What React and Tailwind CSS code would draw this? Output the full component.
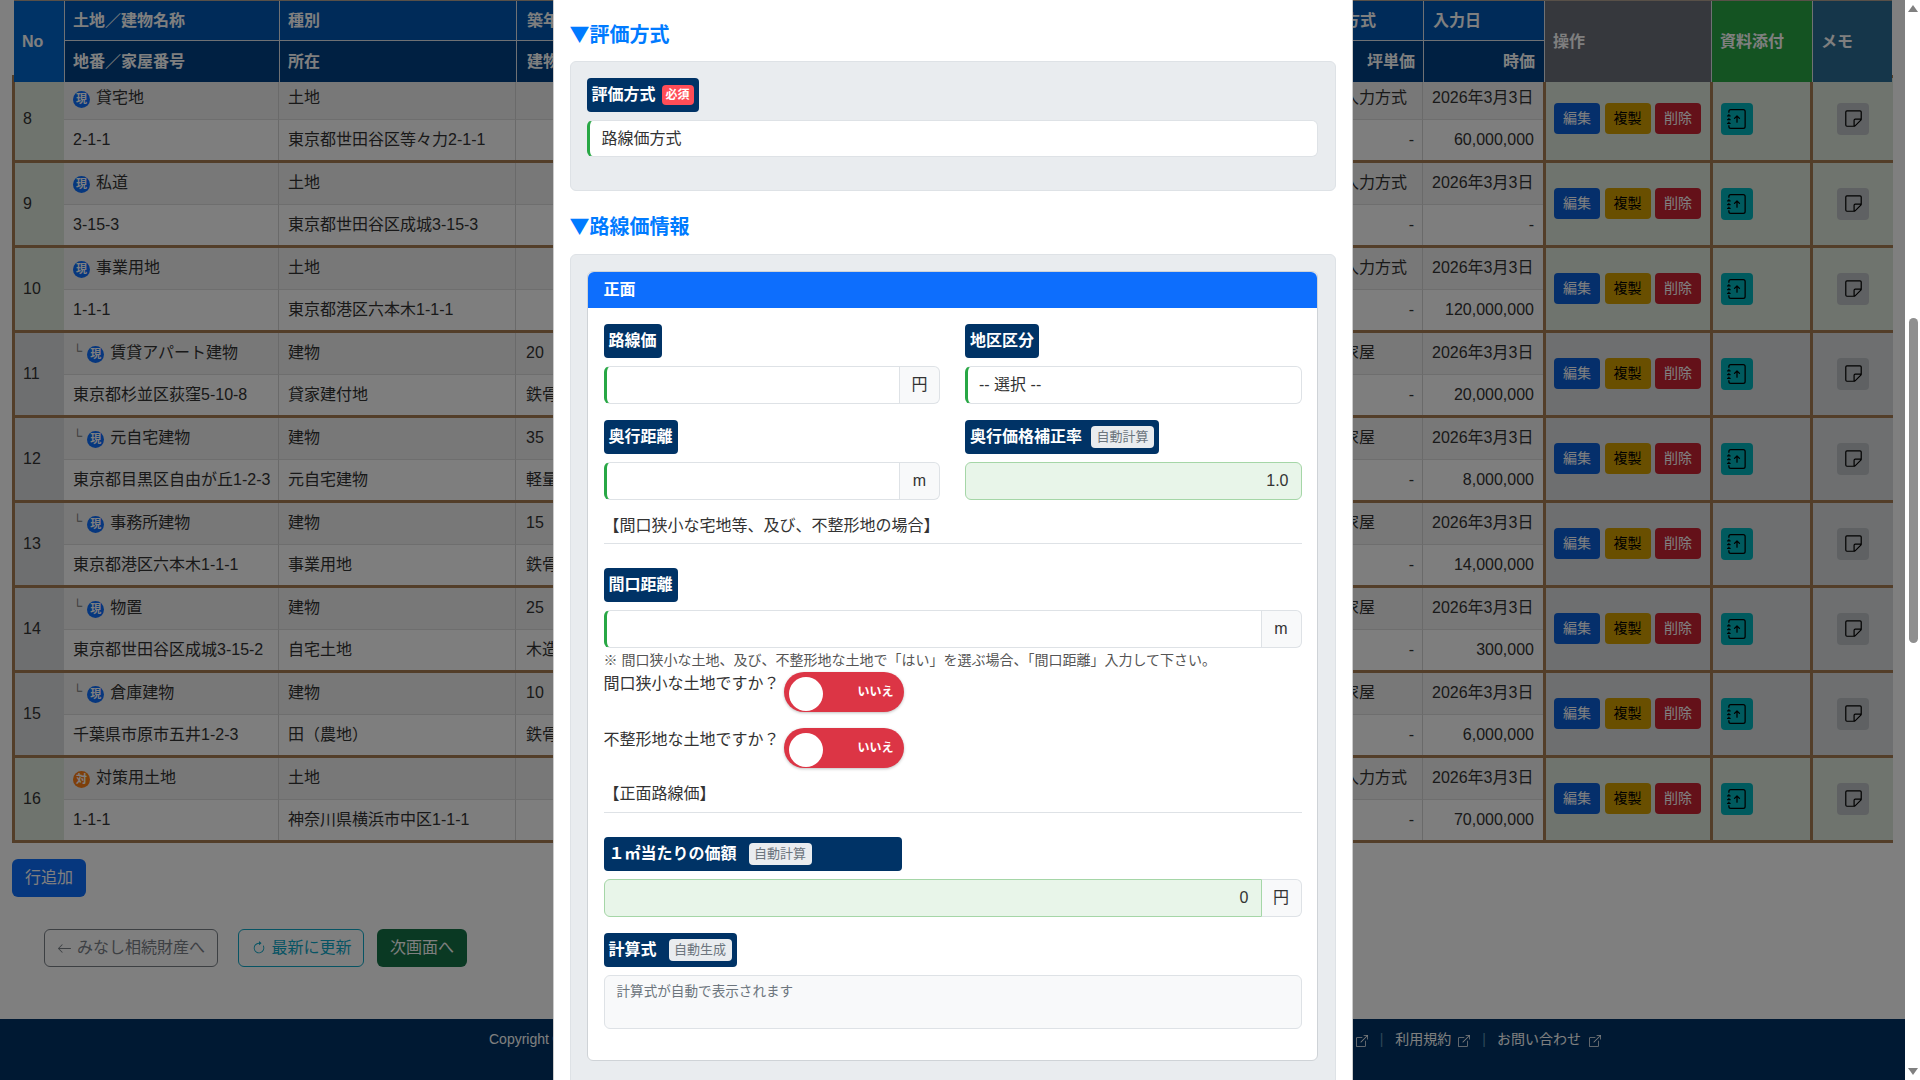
import React from "react";
import { BsSticky, BsJournalArrowUp, BsBoxArrowUpRight, BsArrowClockwise, BsArrowLeft } from "react-icons/bs";

const rows = [
  { no: 8, kind: "land", badge: "現", name: "貸宅地", type: "土地", sub: "2-1-1", addr: "東京都世田谷区等々力2-1-1", method: "入力方式", value: "60,000,000" },
  { no: 9, kind: "land", badge: "現", name: "私道", type: "土地", sub: "3-15-3", addr: "東京都世田谷区成城3-15-3", method: "入力方式", value: "-" },
  { no: 10, kind: "land", badge: "現", name: "事業用地", type: "土地", sub: "1-1-1", addr: "東京都港区六本木1-1-1", method: "入力方式", value: "120,000,000" },
  { no: 11, kind: "bld", badge: "現", name: "賃貸アパート建物", type: "建物", sub: "東京都杉並区荻窪5-10-8", addr: "貸家建付地", age: "20", st: "鉄骨", method: "家屋", value: "20,000,000" },
  { no: 12, kind: "bld", badge: "現", name: "元自宅建物", type: "建物", sub: "東京都目黒区自由が丘1-2-3", addr: "元自宅建物", age: "35", st: "軽量", method: "家屋", value: "8,000,000" },
  { no: 13, kind: "bld", badge: "現", name: "事務所建物", type: "建物", sub: "東京都港区六本木1-1-1", addr: "事業用地", age: "15", st: "鉄骨", method: "家屋", value: "14,000,000" },
  { no: 14, kind: "bld", badge: "現", name: "物置", type: "建物", sub: "東京都世田谷区成城3-15-2", addr: "自宅土地", age: "25", st: "木造", method: "家屋", value: "300,000" },
  { no: 15, kind: "bld", badge: "現", name: "倉庫建物", type: "建物", sub: "千葉県市原市五井1-2-3", addr: "田（農地）", age: "10", st: "鉄骨", method: "家屋", value: "6,000,000" },
  { no: 16, kind: "land", badge: "対", name: "対策用土地", type: "土地", sub: "1-1-1", addr: "神奈川県横浜市中区1-1-1", method: "入力方式", value: "70,000,000" },
];

function HeaderRow() {
  const top = "bg-[#0056b3] border-l border-b border-[#dfe3e8] flex items-center font-bold";
  const bot = "bg-[#004085] border-l border-[#dfe3e8] flex items-center font-bold";
  return (
    <div className="relative z-10 ml-[14px] grid h-[82px] w-[1878px] grid-cols-[50px_215px_237px_819px_88px_121px_167px_101px_80px] grid-rows-[40px_41px] border-t border-[#b0a090] text-white">
      <div className="row-span-2 flex items-center bg-[#0066cc] pl-2 font-bold">No</div>
      <div className={`${top} pl-2`}>土地／建物名称</div>
      <div className={`${top} pl-2`}>種別</div>
      <div className={`${top} pl-[10px]`}>築年数</div>
      <div className={`${top} pl-2`}>方式</div>
      <div className={`${top} pl-[9px]`}>入力日</div>
      <div className="row-span-2 flex items-center border-l border-[#dfe3e8] bg-[#6c717b] pl-2 font-bold">操作</div>
      <div className="row-span-2 flex items-center border-l border-[#dfe3e8] bg-[#28a745] pl-2 font-bold">資料添付</div>
      <div className="row-span-2 flex items-center border-l border-[#dfe3e8] bg-[#2a6d94] pl-2 font-bold">メモ</div>
      <div className={`${bot} pl-2`}>地番／家屋番号</div>
      <div className={`${bot} pl-2`}>所在</div>
      <div className={`${bot} pl-[10px]`}>建物構造</div>
      <div className={`${bot} justify-end pr-2`}>坪単価</div>
      <div className={`${bot} justify-end pr-[9px]`}>時価</div>
    </div>
  );
}

function Row({ r, last }) {
  const side = r.kind === "land" ? "bg-[#dfe8dc]" : "bg-[#dcdee1]";
  const top = "flex items-center border-r border-[#d4d4d4] bg-[#f1f1f1] border-b border-b-[#dcdcdc] pb-[2px]";
  const bot = "flex items-center border-r border-[#d4d4d4] bg-[#fcfcfc]";
  const child = r.kind === "bld";
  return (
    <div className={`ml-3 grid w-[1881px] grid-cols-[49px_215px_237px_819px_88px_120px_167px_100px_83px] grid-rows-[42px_40px] border-l-[3px] border-t-[3px] border-[#a67c52] text-[#333] ${last ? "border-b-[3px]" : ""}`}>
      <div className={`row-span-2 flex items-center pl-2 ${side}`}>{r.no}</div>
      <div className={`${top} pl-[9px]`}>
        {child && <span className="mr-[5px] -mt-[5px] text-[13px] leading-none text-[#777]">└</span>}
        <span className={`mr-[6px] mt-[3px] flex h-[17px] w-[17px] shrink-0 items-center justify-center rounded-full text-[11px] font-bold text-white ${r.badge === "対" ? "bg-[#fd7e14]" : "bg-[#0d6efd]"}`}>{r.badge}</span>
        <span>{r.name}</span>
      </div>
      <div className={`${top} pl-[9px]`}>{r.type}</div>
      <div className={`${top} pl-[10px]`}>{r.age}</div>
      <div className={`${top} pl-2`}>{r.method}</div>
      <div className={`${top} border-r-0 pl-[9px]`}>2026年3月3日</div>
      <div className={`row-span-2 flex items-center gap-[4.5px] border-l-[3px] border-[#a67c52] pb-[2px] pl-2 text-sm ${side}`}>
        <button className="h-[31px] w-[46px] rounded bg-[#0b5ed7] text-white">編集</button>
        <button className="h-[31px] w-[46px] rounded bg-[#d39e00] text-black">複製</button>
        <button className="h-[31px] w-[46px] rounded bg-[#c82333] text-white">削除</button>
      </div>
      <div className={`row-span-2 flex items-center border-l-[3px] border-[#a67c52] pb-[1px] pl-2 ${side}`}>
        <button className="flex h-8 w-8 items-center justify-center rounded bg-[#00b5bd] text-black"><BsJournalArrowUp size={20} /></button>
      </div>
      <div className={`row-span-2 flex items-center justify-center border-l-[3px] border-[#a67c52] pb-[1px] ${side}`}>
        <button className="flex h-8 w-8 items-center justify-center rounded bg-[#bfc3c6] text-black"><BsSticky size={19} /></button>
      </div>
      <div className={`${bot} pl-[9px]`}>{r.sub}</div>
      <div className={`${bot} pl-[9px]`}>{r.addr}</div>
      <div className={`${bot} pl-[10px]`}>{r.st}</div>
      <div className={`${bot} justify-end pr-2`}>-</div>
      <div className={`${bot} justify-end border-r-0 pr-[9px]`}>{r.value}</div>
    </div>
  );
}

function FieldLabel({ children, className = "" }) {
  return <div className={`inline-flex h-[34px] items-center rounded bg-[#003366] px-[5px] font-bold text-white ${className}`}>{children}</div>;
}

function Auto({ children, className = "" }) {
  return <span className={`inline-flex h-[22px] items-center rounded bg-[#e9ecef] px-[5.5px] text-[13px] font-normal text-[#6c757d] ${className}`}>{children}</span>;
}

function InputGroup({ unit, value, green }) {
  return (
    <div className="flex h-[38px] w-full">
      <div className={`flex min-w-0 flex-1 items-center justify-end rounded-l-md border pr-3 ${green ? "border-[#a5d6a7] bg-[#e8f5e9]" : "border-[#dee2e6] border-l-[3px] border-l-[#28a745] bg-white"}`}>{value}</div>
      <div className="flex w-[40px] items-center justify-center rounded-r-md border border-l-0 border-[#dee2e6] bg-[#f8f9fa]">{unit}</div>
    </div>
  );
}

function Toggle({ label, mt }) {
  return (
    <div className={`flex items-start gap-1 ${mt}`}>
      <span className="leading-6">{label}</span>
      <div className="flex h-10 w-[120px] items-center justify-between rounded-full bg-[#dc3545] pl-[5px] pr-[10px] shadow-[0_1px_3px_rgba(0,0,0,0.25)]">
        <span className="mt-[4px] h-[34px] w-[34px] rounded-full bg-white" />
        <span className="text-xs font-bold text-white">いいえ</span>
      </div>
    </div>
  );
}

function Heading({ children, className = "" }) {
  return <h2 className={`h-7 text-xl font-bold leading-7 text-[#007bff] ${className}`}><span className="font-['Noto_Sans_CJK_JP',sans-serif]">▼</span>{children}</h2>;
}

function Modal() {
  return (
    <div className="absolute inset-0 z-20 flex justify-center bg-black/50">
      <div className="h-full w-[800px] overflow-hidden border-x border-black/20 bg-white pl-4 text-[#333]">
        <Heading className="mt-[20px]">評価方式</Heading>
        <section className="mt-[13px] h-[130px] w-[766px] rounded-md border border-[#dee2e6] bg-[#e9ecef] pl-4 pr-[17px] pt-4">
          <FieldLabel>評価方式<span className="ml-[6px] flex h-5 w-8 items-center justify-center rounded bg-[#ff4d57] text-xs font-bold">必須</span></FieldLabel>
          <div className="mt-2 flex h-[37px] items-center rounded-md border border-[#dee2e6] border-l-[3px] border-l-[#28a745] bg-white pl-3">路線価方式</div>
        </section>
        <Heading className="mt-[21px]">路線価情報</Heading>
        <section className="mt-[14px] w-[766px] rounded-t-md border border-[#dee2e6] bg-[#e9ecef] pl-4 pr-[17px] pb-10 pt-4">
          <div className="rounded-md border border-[#cfd3d7] bg-white">
            <div className="flex h-9 items-center rounded-t-md bg-[#0d6efd] pl-4 font-bold text-white">正面</div>
            <div className="pb-[31px] pl-4 pr-[15px] pt-4">
              <div className="grid grid-cols-2 gap-x-[25px] gap-y-4">
                <div><FieldLabel>路線価</FieldLabel><div className="mt-2"><InputGroup unit="円" /></div></div>
                <div><FieldLabel>地区区分</FieldLabel><div className="mt-2 flex h-[38px] items-center rounded-md border border-[#dee2e6] border-l-[3px] border-l-[#28a745] bg-white pl-[11px]">-- 選択 --</div></div>
                <div><FieldLabel>奥行距離</FieldLabel><div className="mt-2"><InputGroup unit="m" /></div></div>
                <div><FieldLabel>奥行価格補正率<Auto className="ml-[9px]">自動計算</Auto></FieldLabel><div className="mt-2 flex h-[38px] items-center justify-end rounded-md border border-[#a5d6a7] bg-[#e8f5e9] pr-3">1.0</div></div>
              </div>
              <div className="mt-[14px] h-6 leading-6">【間口狭小な宅地等、及び、不整形地の場合】</div>
              <div className="mt-[5px] border-t border-[#dee2e6]" />
              <FieldLabel className="mt-6">間口距離</FieldLabel>
              <div className="mt-2"><InputGroup unit="m" /></div>
              <div className="mt-[2px] h-5 text-sm leading-5 text-[#555]">※ 間口狭小な土地、及び、不整形地な土地で「はい」を選ぶ場合、「間口距離」入力して下さい。</div>
              <Toggle label="間口狭小な土地ですか？" mt="mt-[2px]" />
              <Toggle label="不整形地な土地ですか？" mt="mt-4" />
              <div className="mt-[14px] h-6 leading-6">【正面路線価】</div>
              <div className="mt-[6px] border-t border-[#dee2e6]" />
              <FieldLabel className="mt-6 w-[298px] px-2">１㎡当たりの価額<Auto className="ml-3">自動計算</Auto></FieldLabel>
              <div className="mt-2"><InputGroup unit="円" value="0" green /></div>
              <FieldLabel className="mt-4">計算式<Auto className="ml-3">自動生成</Auto></FieldLabel>
              <div className="mt-2 h-[54px] rounded-md border border-[#dee2e6] bg-[#f8f9fa] px-3 pt-[6px] text-[13.6px] leading-5 text-[#6c757d]">計算式が自動で表示されます</div>
            </div>
          </div>
        </section>
      </div>
    </div>
  );
}

function Footer() {
  return (
    <footer className="mt-[52px] flex h-[61px] items-start justify-between bg-[#003366] pl-[489px] pr-[304px] pt-[10px] text-sm text-white">
      <span>Copyright © All Rights Reserved.</span>
      <div className="flex items-center">
        <BsBoxArrowUpRight size={12} className="mt-[3px]" />
        <span className="ml-[12px] text-[#5a8fb0]">|</span>
        <span className="ml-[12px]">利用規約</span>
        <BsBoxArrowUpRight size={12} className="ml-[7px] mt-[3px]" />
        <span className="ml-[12px] text-[#5a8fb0]">|</span>
        <span className="ml-[11px]">お問い合わせ</span>
        <BsBoxArrowUpRight size={12} className="ml-[8px] mt-[3px]" />
      </div>
    </footer>
  );
}

function Scrollbar() {
  return (
    <aside className="flex w-[15px] shrink-0 flex-col items-center bg-white pb-[5px] pl-[1px] pt-[5px]">
      <svg width="10" height="7" viewBox="0 0 10 7"><path d="M5 0 L10 7 H0 Z" fill="#808080" /></svg>
      <div className="mt-[306px] h-[325px] w-[9px] rounded-full bg-[#8f8f8f]" />
      <div className="flex-1" />
      <svg width="10" height="7" viewBox="0 0 10 7"><path d="M0 0 H10 L5 7 Z" fill="#808080" /></svg>
    </aside>
  );
}

export default function App() {
  return (
    <div className="flex h-[1080px] w-[1920px] overflow-hidden bg-white font-['Liberation_Sans','Noto_Sans_CJK_JP',sans-serif] text-base">
      <main className="relative min-w-0 flex-1 overflow-hidden bg-white">
        <HeaderRow />
        <div className="-mt-[7px]">
          {rows.map((r, i) => <Row key={r.no} r={r} last={i === rows.length - 1} />)}
        </div>
        <button className="ml-3 mt-4 block h-[38px] w-[74px] rounded-md bg-[#0d6efd] text-white">行追加</button>
        <div className="ml-[44px] mt-8 flex h-[38px]">
          <button className="flex w-[174px] items-center justify-center gap-[5px] rounded-md border border-[#7a8087] text-[#7a8087]"><BsArrowLeft size={15} />みなし相続財産へ</button>
          <button className="ml-5 flex w-[126px] items-center justify-center gap-[5px] rounded-md border border-[#0fa8c8] pl-[2px] text-[#0fa8c8]"><BsArrowClockwise size={14} />最新に更新</button>
          <button className="ml-[13px] w-[90px] rounded-md bg-[#157347] text-white">次画面へ</button>
        </div>
        <Footer />
        <Modal />
      </main>
      <Scrollbar />
    </div>
  );
}
